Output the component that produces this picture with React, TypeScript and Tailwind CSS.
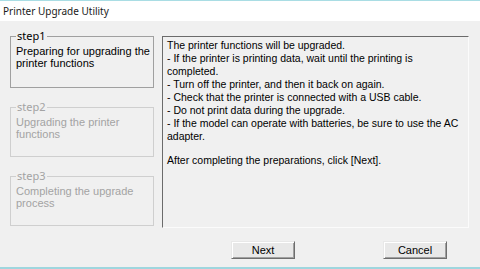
import React from 'react'

const steps = [
    { label: 'step1', text: 'Preparing for upgrading the printer functions', active: true, h: 'h-[52px]' },
    { label: 'step2', text: 'Upgrading the printer functions', active: false, h: 'h-[50px]' },
    { label: 'step3', text: 'Completing the upgrade process', active: false, h: 'h-[50px]' },
]

const lines = [
    'The printer functions will be upgraded.',
    '- If the printer is printing data, wait until the printing is completed.',
    '- Turn off the printer, and then it back on again.',
    '- Check that the printer is connected with a USB cable.',
    '- Do not print data during the upgrade.',
    '- If the model can operate with batteries, be sure to use the AC adapter.',
]

const StepBox = ({ label, text, active, h }: { label: string; text: string; active: boolean; h: string }) => (
    <div className={`relative ${h} border ${active ? 'border-[#a0a0a0]' : 'border-[#cfcfcf]'} pl-[5px] pr-[3px] pt-[8px]`}>
        <span
            className={`absolute -top-[8px] left-[5px] bg-[#f0f0f0] px-[1px] font-['Noto_Sans',sans-serif] text-[11px] leading-[14px] ${active ? 'text-black' : 'text-[#a3a3a3]'}`}
        >
            {label}
        </span>
        <p className={`text-[11px] leading-[12px] ${active ? 'text-black' : 'text-[#a3a3a3]'}`}>{text}</p>
    </div>
)

const WinButton = ({ children, className = '' }: { children: React.ReactNode; className?: string }) => (
    <button
        className={`h-[18px] w-[64px] border border-t-[#e8e8e8] border-l-[#e8e8e8] border-r-[#6e6e6e] border-b-[#6e6e6e] bg-[#e8e8e8] text-[11px] leading-[14px] text-black shadow-[inset_1px_1px_0_#ffffff,inset_-1px_-1px_0_#a0a0a0] ${className}`}
    >
        {children}
    </button>
)

export default function App() {
    return (
        <div className="flex h-[269px] w-[480px] flex-col overflow-hidden bg-[#f0f0f0] font-['Liberation_Sans',Arial,sans-serif]">
            <div className="h-px bg-[#a9dde4]" />
            <div className="flex h-[20px] items-center bg-white pl-[3px] font-['Noto_Sans',sans-serif] text-[10px] text-[#1a1a1a]">
                Printer Upgrade Utility
            </div>

            <div className="flex px-[10px] pt-[15px]">
                <div className="flex w-[144px] flex-col gap-[19px]">
                    {steps.map((s) => (
                        <StepBox key={s.label} {...s} />
                    ))}
                </div>

                <div className="ml-[8px] h-[192px] w-[307px] border border-t-[#6b6b6b] border-l-[#6b6b6b] border-r-[#fbfbfb] border-b-[#fbfbfb] pl-[4px] pr-[4px] pt-[2px] text-[10.5px] leading-[13px] text-black">
                    {lines.map((l) => (
                        <p key={l}>{l}</p>
                    ))}
                    <p className="mt-[11px]">After completing the preparations, click [Next].</p>
                </div>
            </div>

            <div className="mt-[13px] flex">
                <WinButton className="ml-[231px]">Next</WinButton>
                <WinButton className="ml-[88px]">Cancel</WinButton>
            </div>

            <div className="mt-auto h-[2px] bg-[#9fd6de]" />
        </div>
    )
}
